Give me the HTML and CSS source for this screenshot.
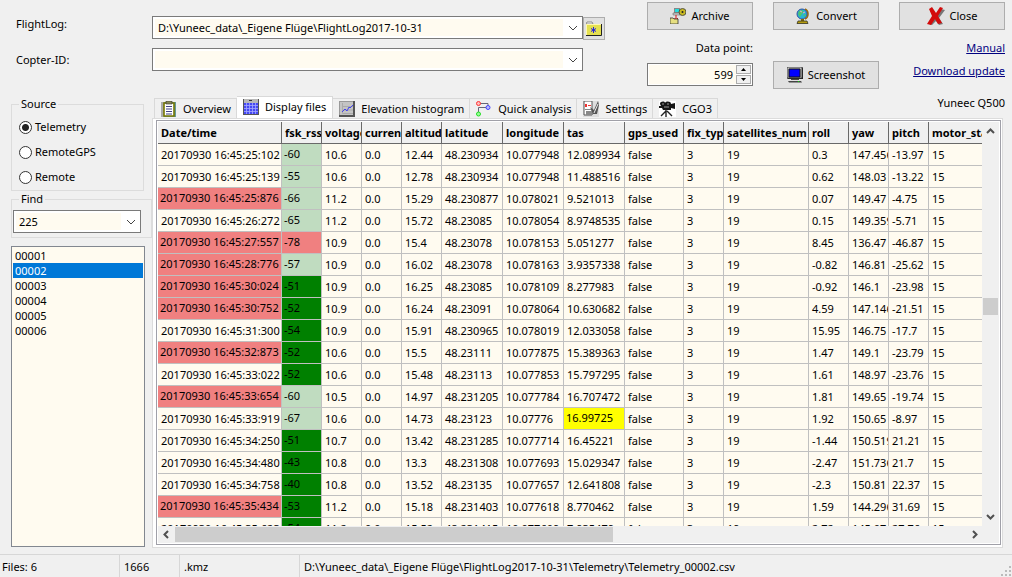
FILE: index.html
```html
<!DOCTYPE html>
<html lang="en">
<head>
<meta charset="utf-8">
<title>Q500 log analyser</title>
<link rel="stylesheet" href="styles.css">
</head>
<body>
<div class="app">
  <header class="top">
    <form class="paths">
      <label for="log">FlightLog:</label>
      <div class="combo">
        <select id="log"><option>D:\Yuneec_data\_Eigene Flüge\FlightLog2017-10-31</option></select>
        <svg class="chev" viewBox="0 0 10 6"><path d="M1 1l4 4 4-4"/></svg>
      </div>
      <button type="button" class="btn browse" aria-label="Browse">
        <svg width="16" height="16" viewBox="0 0 16 16"><path d="M0 3l1-2h5l1 2z" fill="#fff" stroke="#888"/><path d="M0 3h15v11H0z" fill="#e4e050"/><path d="M.5 14V3.500H15" fill="none" stroke="#fff8b0"/><path d="M0 14.500h15.500V3" fill="none" stroke="#222"/><path d="M7.500 6v6M5 7.500l5 3M10 7.500l-5 3" stroke="#22d"/></svg>
      </button>
      <label for="copter">Copter-ID:</label>
      <div class="combo">
        <select id="copter"><option></option></select>
        <svg class="chev" viewBox="0 0 10 6"><path d="M1 1l4 4 4-4"/></svg>
      </div>
    </form>
    <div class="col">
      <button class="btn">
        <svg width="16" height="16" viewBox="0 0 16 16"><path d="M4 0h6v5H4z" fill="#888"/><path d="M5 1h4v3H5z" fill="#2dd"/><path d="M3 5h7v2H3z" fill="#ccc" stroke="#555" stroke-width=".5"/><circle cx="12.500" cy="4" r="3.500" fill="#c8b820" stroke="#554" stroke-width="1"/><circle cx="12.500" cy="4" r="1" fill="#222"/><path d="M6 7v5M4.500 10L6 12l2-2" fill="none" stroke="#d11"/><path d="M0 10h3l1 1h4v5H0z" fill="#e6df80" stroke="#333" stroke-width=".8"/></svg>
        Archive</button>
      <label class="dp" for="dp">Data point:</label>
      <div class="spin">
        <input id="dp" type="text" value="599">
        <div class="steps">
          <button aria-label="Up"><svg width="5" height="3" viewBox="0 0 5 3"><path d="M0 3L2.500 0 5 3z"/></svg></button>
          <button aria-label="Down"><svg width="5" height="3" viewBox="0 0 5 3"><path d="M0 0L2.500 3 5 0z"/></svg></button>
        </div>
      </div>
    </div>
    <div class="col spread">
      <button class="btn">
        <svg width="16" height="16" viewBox="0 0 16 16"><path d="M10 1c4 2 4 8 0 10" fill="none" stroke="#996d10" stroke-width="1.600"/><circle cx="7" cy="6" r="5" fill="#25b5d8" stroke="#3450a0"/><path d="M4 3l3-1 2 2-2 2-2 3-2-3zM8 7l3-1-1 3z" fill="#4fc470"/><path d="M5 3l2 1M8 5l2-1" stroke="#f0a0d0"/><path d="M6 11h3v2H6z" fill="#886c00"/><path d="M3 13h9l1 2.500H2z" fill="#b59b10" stroke="#332" stroke-width=".8"/></svg>
        Convert</button>
      <button class="btn">
        <svg width="16" height="16" viewBox="0 0 16 16"><path d="M0 0h15l1 1v11H1l-1-1z" fill="#222"/><path d="M0 0h15v11H0z" fill="#bbb" stroke="#333" stroke-width=".8"/><path d="M2 2h11v8H2z" fill="#00f" stroke="#111"/><path d="M4 12h8v1H4zM1 14h13l1 1.500H2z" fill="#444"/><path d="M11 14h1v1h-1z" fill="#0d0"/></svg>
        Screenshot</button>
    </div>
    <div class="col right">
      <button class="btn">
        <svg width="18" height="19" viewBox="0 0 18 19"><path d="M5 3l4 5 5-6 4 1-6 8 4 6-4 1-3-4-4 4-3-1 5-7-4-6z" fill="#777"/><path d="M2 2l3-2 4 6 4-6 3 1-5 8 4 7-4 1-3-5-4 6-4-1 5-8z" fill="#d30b0b"/></svg>
        Close</button>
      <a href="#manual">Manual</a>
      <a href="#update">Download update</a>
    </div>
  </header>

  <main class="body">
    <aside class="side">
      <fieldset class="group">
        <legend>Source</legend>
        <label><input type="radio" name="src" checked>Telemetry</label>
        <label><input type="radio" name="src">RemoteGPS</label>
        <label><input type="radio" name="src">Remote</label>
      </fieldset>
      <fieldset class="group find">
        <legend>Find</legend>
        <div class="combo">
          <select aria-label="Find"><option>225</option></select>
          <svg class="chev" viewBox="0 0 10 6"><path d="M1 1l4 4 4-4"/></svg>
        </div>
      </fieldset>
      <select class="files" size="6" aria-label="Files">
        <option>00001</option><option selected>00002</option><option>00003</option><option>00004</option><option>00005</option><option>00006</option>
      </select>
    </aside>

    <section class="work">
      <div class="tabrow">
        <div class="tabs" role="tablist">
          <button role="tab"><svg width="16" height="16" viewBox="0 0 16 16"><path d="M0 1h15v15H0z" fill="#699"/><path d="M0 1h3v15H0z" fill="#aaa"/><path d="M3 2h10v13H3z" fill="#fff" stroke="#770" stroke-width="1.600"/><path d="M5 0h6v3H5z" fill="#885" stroke="#333" stroke-width=".6"/><path d="M5 5.500h6M5 8h6M5 10.500h6M5 13h6" stroke="#448" stroke-width="1.200"/></svg>Overview</button>
          <button role="tab" class="on" aria-selected="true"><svg width="16" height="16" viewBox="0 0 16 16"><path d="M0 0h16v16H0z" fill="#555"/><path d="M1 0h14v4H1z" fill="#b8b8b8"/><path d="M6 1h3v1H6z" fill="#333"/><path d="M1 4h14v11H1z" fill="#4548f4"/><path d="M3.500 4v11M6.500 4v11M9.500 4v11M12.500 4v11M1 6.500h14M1 9.500h14M1 12.500h14" stroke="#a5a8ff" stroke-width=".8"/></svg>Display files</button>
          <button role="tab"><svg width="16" height="16" viewBox="0 0 16 16"><path d="M0 0h16v16H0z" fill="#555"/><path d="M0 0h14v14H0z" fill="#999"/><path d="M1 1h13v13H1z" fill="#c4c4c4"/><path d="M3.500 2v10.500H14M3 5.500h11M3 9h11" fill="none" stroke="#aaa"/><path d="M3 11l3-3 2 2 2-4 1 1 3-3" fill="none" stroke="#44e"/></svg>Elevation histogram</button>
          <button role="tab"><svg width="16" height="16" viewBox="0 0 16 16"><path d="M4 2.500h8v4M12 6.500H2.500V12" fill="none" stroke="#667"/><circle cx="2.500" cy="2.500" r="2" fill="#fbb" stroke="#f33"/><circle cx="12" cy="6.500" r="2" fill="#bbf" stroke="#44f"/><circle cx="2.500" cy="13" r="2" fill="#9f9" stroke="#2d2"/></svg>Quick analysis</button>
          <button role="tab"><svg width="16" height="16" viewBox="0 0 16 16"><path d="M0 0h16v16H0z" fill="#ddd"/><path d="M1 0h8v14H1z" fill="#fff" stroke="#555"/><path d="M2 3h2v3H2zM5 4h3v1H5z" fill="#e33"/><path d="M2 8h6v1H2zM3 10h7v4H3z" fill="#888"/><path d="M15 0l-4 9-4-3 3 7h4l2-9z" fill="#555"/><path d="M15 3l-4 9" stroke="#eee"/></svg>Settings</button>
          <button role="tab"><svg width="17" height="16" viewBox="0 0 17 16"><path d="M0 0h17v16H0z" fill="#fff"/><path d="M1 3c0-3 5-3 5-1 1-2 6-2 6 1l4-1v6l-4-1v2H4L3 7H0V5h2z" fill="#151515"/><path d="M3 3h2M8 3h2M5 6h5" stroke="#999"/><path d="M7 8v8M7 10l-5 5M8 10l5 5" stroke="#222" stroke-width="1.400"/></svg>CGO3</button>
        </div>
        <span class="model">Yuneec Q500</span>
      </div>
      <div class="pane"><div class="grid">
        <div class="view">
          <table>
            <colgroup><col class="w124"><col class="w40"><col class="w40"><col class="w40"><col class="w40"><col class="w61"><col class="w61"><col class="w61"><col class="w59"><col class="w40"><col class="w85"><col class="w40"><col class="w40"><col class="w40"><col></colgroup>
            <thead><tr><th>Date/time<th>fsk_rssi<th>voltage<th>current<th>altitude<th>latitude<th>longitude<th>tas<th>gps_used<th>fix_type<th>satellites_num<th>roll<th>yaw<th>pitch<th>motor_status</tr></thead>
            <tbody>
            <tr><td>20170930 16:45:25:102<td class="l">-60<td>10.6<td>0.0<td>12.44<td>48.230934<td>10.077948<td>12.089934<td>false<td>3<td>19<td>0.3<td>147.456<td>-13.97<td>15
            <tr><td>20170930 16:45:25:139<td class="l">-55<td>10.6<td>0.0<td>12.78<td>48.230934<td>10.077948<td>11.488516<td>false<td>3<td>19<td>0.62<td>148.03<td>-13.22<td>15
            <tr><td class="r">20170930 16:45:25:876<td class="l">-66<td>11.2<td>0.0<td>15.29<td>48.230877<td>10.078021<td>9.521013<td>false<td>3<td>19<td>0.07<td>149.47<td>-4.75<td>15
            <tr><td>20170930 16:45:26:272<td class="l">-65<td>11.2<td>0.0<td>15.72<td>48.23085<td>10.078054<td>8.9748535<td>false<td>3<td>19<td>0.15<td>149.359<td>-5.71<td>15
            <tr><td class="r">20170930 16:45:27:557<td class="r">-78<td>10.9<td>0.0<td>15.4<td>48.23078<td>10.078153<td>5.051277<td>false<td>3<td>19<td>8.45<td>136.47<td>-46.87<td>15
            <tr><td class="r">20170930 16:45:28:776<td class="l">-57<td>10.9<td>0.0<td>16.02<td>48.23078<td>10.078163<td>3.9357338<td>false<td>3<td>19<td>-0.82<td>146.81<td>-25.62<td>15
            <tr><td class="r">20170930 16:45:30:024<td class="g">-51<td>10.9<td>0.0<td>16.25<td>48.23085<td>10.078109<td>8.277983<td>false<td>3<td>19<td>-0.92<td>146.1<td>-23.98<td>15
            <tr><td class="r">20170930 16:45:30:752<td class="g">-52<td>10.9<td>0.0<td>16.24<td>48.23091<td>10.078064<td>10.630682<td>false<td>3<td>19<td>4.59<td>147.146<td>-21.51<td>15
            <tr><td>20170930 16:45:31:300<td class="g">-54<td>10.9<td>0.0<td>15.91<td>48.230965<td>10.078019<td>12.033058<td>false<td>3<td>19<td>15.95<td>146.75<td>-17.7<td>15
            <tr><td class="r">20170930 16:45:32:873<td class="g">-52<td>10.6<td>0.0<td>15.5<td>48.23111<td>10.077875<td>15.389363<td>false<td>3<td>19<td>1.47<td>149.1<td>-23.79<td>15
            <tr><td>20170930 16:45:33:022<td class="g">-52<td>10.6<td>0.0<td>15.48<td>48.23113<td>10.077853<td>15.797295<td>false<td>3<td>19<td>1.61<td>148.97<td>-23.76<td>15
            <tr><td class="r">20170930 16:45:33:654<td class="l">-60<td>10.5<td>0.0<td>14.97<td>48.231205<td>10.077784<td>16.707472<td>false<td>3<td>19<td>1.81<td>149.65<td>-19.74<td>15
            <tr><td>20170930 16:45:33:919<td class="l">-67<td>10.6<td>0.0<td>14.73<td>48.23123<td>10.07776<td class="y">16.99725<td>false<td>3<td>19<td>1.92<td>150.65<td>-8.97<td>15
            <tr><td>20170930 16:45:34:250<td class="g">-51<td>10.7<td>0.0<td>13.42<td>48.231285<td>10.077714<td>16.45221<td>false<td>3<td>19<td>-1.44<td>150.519<td>21.21<td>15
            <tr><td>20170930 16:45:34:480<td class="g">-43<td>10.8<td>0.0<td>13.3<td>48.231308<td>10.077693<td>15.029347<td>false<td>3<td>19<td>-2.47<td>151.736<td>21.7<td>15
            <tr><td>20170930 16:45:34:758<td class="g">-40<td>10.8<td>0.0<td>13.52<td>48.23135<td>10.077657<td>12.641808<td>false<td>3<td>19<td>-2.3<td>150.81<td>22.37<td>15
            <tr><td class="r">20170930 16:45:35:434<td class="g">-53<td>11.2<td>0.0<td>15.18<td>48.231403<td>10.077618<td>8.770462<td>false<td>3<td>19<td>1.59<td>144.296<td>31.69<td>15
            <tr><td>20170930 16:45:35:623<td class="g">-54<td>11.2<td>0.0<td>15.52<td>48.231415<td>10.077609<td>7.935479<td>false<td>3<td>19<td>2.72<td>145.07<td>27.76<td>15
            </tbody>
          </table>
        </div>
        <div class="vbar">
          <svg width="9" height="6" viewBox="0 0 9 6"><path d="M1 5l3.500-3.500L8 5"/></svg>
          <div class="track"><div class="thumb"></div></div>
          <svg width="9" height="6" viewBox="0 0 9 6"><path d="M1 1l3.500 3.500L8 1"/></svg>
        </div>
        <div class="hbar">
          <svg width="6" height="9" viewBox="0 0 6 9"><path d="M5 1L1.500 4.500 5 8"/></svg>
          <div class="track"><div class="thumb"></div></div>
          <svg width="6" height="9" viewBox="0 0 6 9"><path d="M1 1l3.500 3.500L1 8"/></svg>
        </div>
      </div></div>
    </section>
  </main>

  <footer class="status">
    <span class="s120">Files: 6</span><span class="s60">1666</span><span class="s120">.kmz</span><span class="last">D:\Yuneec_data\_Eigene Flüge\FlightLog2017-10-31\Telemetry\Telemetry_00002.csv</span>
    <svg width="12" height="12" viewBox="0 0 12 12"><path d="M9 1h2v2H9zM9 5h2v2H9zM5 5h2v2H5zM9 9h2v2H9zM5 9h2v2H5zM1 9h2v2H1z" fill="#bbb"/></svg>
  </footer>
</div>
</body>
</html>
```

FILE: styles.css
```css
* { box-sizing: border-box; }
body, button, select, input {
  margin: 0;
  font: 11px/16px "Noto Sans", "Open Sans", sans-serif;
  color: #000;
}
button { padding: 0; }
.app {
  display: flex;
  flex-direction: column;
  height: 100vh;
  background: #f0f0f0;
  overflow: hidden;
}

/* top area */
.top {
  display: flex;
  gap: 20px;
  height: 96px;
  padding: 2px 7px 0 16px;
}
.paths {
  flex: 1;
  display: grid;
  grid-template-columns: 136px 1fr 22px;
  grid-template-rows: 23px 23px;
  row-gap: 9px;
  margin: 14px 22px 0 0;
}
.paths label { align-self: center; }
.paths label:first-child { align-self: start; }
.combo {
  display: flex;
  align-items: center;
  height: 23px;
  padding: 2px;
  background: #fff;
  border: 1px solid #7a7a7a;
}
.combo select {
  flex: 1;
  min-width: 0;
  height: 17px;
  padding: 0 3px;
  border: 0;
  appearance: none;
  background: #fffbf0;
}
.chev {
  width: 10px;
  height: 6px;
  margin: 0 2px 0 5px;
  fill: none;
  stroke: #444;
}
.btn {
  display: flex;
  align-items: center;
  justify-content: center;
  gap: 5px;
  height: 28px;
  width: 100%;
  background: #e1e1e1;
  border: 1px solid #adadad;
}
.browse { height: 23px; margin-top: 1px; }
.col {
  display: flex;
  flex-direction: column;
  width: 106px;
}
.dp { text-align: right; padding: 10px 0 7px; }
.spin {
  display: flex;
  height: 23px;
  padding: 1px;
  background: #fff;
  border: 1px solid #7a7a7a;
}
.spin input {
  flex: 1;
  min-width: 0;
  padding: 0 3px;
  border: 0;
  background: #fffbf0;
  text-align: right;
}
.steps { display: grid; width: 15px; gap: 1px; }
.steps button {
  display: flex;
  align-items: center;
  justify-content: center;
  background: #f0f0f0;
  border: 1px solid #acacac;
}
.spread { gap: 31px; }
.right { align-items: flex-end; white-space: nowrap; }
.right a { color: #000080; margin-top: 7px; }
.right .btn { margin-bottom: 3px; }

/* left side */
.body {
  flex: 1;
  display: flex;
  min-height: 0;
}
.side {
  display: flex;
  flex-direction: column;
  width: 152px;
  padding: 0 0 7px 11px;
}
.group {
  display: flex;
  flex-direction: column;
  gap: 9px;
  width: 133px;
  margin: 0;
  padding: 7px 7px 5px;
  border: 1px solid #dcdcdc;
}
.group legend { padding: 0 2px; }
.group label {
  display: flex;
  align-items: center;
  gap: 3px;
}
.group input {
  appearance: none;
  width: 13px;
  height: 13px;
  margin: 0;
  border: 1px solid #333;
  border-radius: 50%;
  background: #fff;
}
.group input:checked { background: radial-gradient(#222 0 3px, #fff 4px); }
.find { width: 141px; padding: 3px 1px 4px; }
.find legend { margin-left: 6px; }
.find .combo { width: 128px; }
.files {
  flex: 1;
  width: 134px;
  margin-top: 8px;
  padding: 1px;
  border: 1px solid #828790;
  border-radius: 0;
  background: #fffbf0;
  overflow: hidden;
}
.files option {
  min-height: 15px;
  padding: 0 2px;
  line-height: 15px;
}
.files option:checked {
  background: linear-gradient(#0078d7, #0078d7);
  color: #fff;
}

/* tabs */
.work {
  flex: 1;
  min-width: 0;
  display: flex;
  flex-direction: column;
  padding: 0 9px 6px 0;
}
.tabrow {
  display: flex;
  justify-content: space-between;
  align-items: flex-end;
  height: 22px;
}
.tabs {
  display: flex;
  align-items: flex-end;
  padding-left: 2px;
}
.tabs button {
  display: flex;
  align-items: center;
  gap: 6px;
  height: 20px;
  padding: 0 5px 0 6px;
  background: #f0f0f0;
  border: 1px solid #d9d9d9;
  border-width: 1px 1px 0 0;
  white-space: nowrap;
}
.tabs button:first-child { border-left-width: 1px; }
.tabs .on {
  height: 23px;
  margin-bottom: -1px;
  padding: 0 6px 3px;
  background: #fff;
}
.model { align-self: center; margin: 0 -2px 8px 0; }
.pane {
  flex: 1;
  min-height: 0;
  display: flex;
  padding: 1px 1px 2px 3px;
  background: #fff;
  border: 1px solid #dcdcdc;
}
.grid {
  flex: 1;
  min-width: 0;
  display: grid;
  grid-template: minmax(0, 1fr) 17px / minmax(0, 1fr) 17px;
  padding: 1px;
  border: 1px solid #a0a0a8;
}
.view { overflow: hidden; background: #fff; }

/* data grid */
table {
  width: 100%;
  table-layout: fixed;
  border-collapse: separate;
  border-spacing: 0;
}
.w124 { width: 124px; }
.w40 { width: 40px; }
.w59 { width: 59px; }
.w61 { width: 61px; }
.w85 { width: 85px; }
th, td {
  height: 22px;
  padding: 0 0 0 3px;
  overflow: hidden;
  white-space: nowrap;
  text-align: left;
  line-height: 21px;
  border: 1px solid #c0c0c0;
  border-width: 0 1px 1px 0;
}
th {
  background: #f0f0f0;
  border-color: #696969;
}
td { background: #fffbf0; }
th:last-child, td:last-child { border-right: 0; }
td.l, td.r, td.g, td.y { padding: 0 0 2px 2px; line-height: 19px; }
td.l { background: #c0dcc0; }
td.r { background: #f08080; }
td.g { background: #008000; }
td.y { background: #ff0; }

/* scroll bars */
.vbar, .hbar {
  display: flex;
  align-items: center;
  background: #f0f0f0;
  fill: none;
  stroke: #505050;
  stroke-width: 2;
}
.vbar { flex-direction: column; padding: 6px 0; }
.hbar { padding: 0 21px 0 5px; }
.track { flex: 1; display: flex; }
.vbar .track {
  flex-direction: column;
  width: 17px;
  padding-top: 164px;
}
.hbar .track { height: 15px; padding-left: 6px; }
.thumb { background: #cdcdcd; }
.vbar .thumb { height: 17px; margin: 0 1px; }
.hbar .thumb { width: 55%; }
.hbar { grid-column: 1 / -1; }

/* status bar */
.status {
  display: flex;
  height: 23px;
  border-top: 1px solid #d7d7d7;
}
.status span {
  padding: 4px 4px 2px;
  border-right: 1px solid #d7d7d7;
}
.status .s120 { width: 120px; }
.status .s120:first-child { padding-left: 2px; }
.status .s60 { width: 60px; }
.status .last { flex: 1; border: 0; }
.status svg { align-self: flex-end; }
```
